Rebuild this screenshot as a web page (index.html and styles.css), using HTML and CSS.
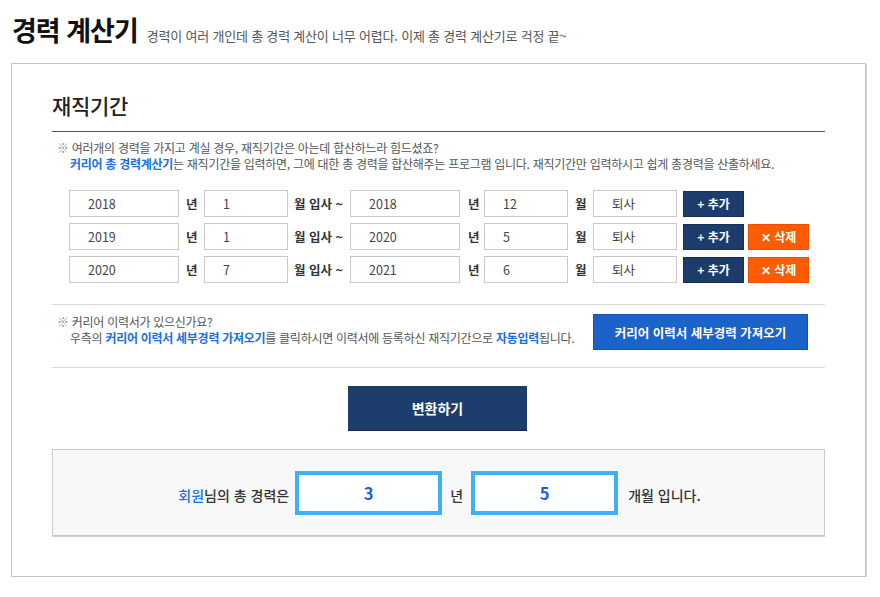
FILE: index.html
```html
<!DOCTYPE html>
<html lang="ko">
<head>
<meta charset="utf-8">
<title>경력 계산기</title>
<link rel="stylesheet" href="styles.css">
</head>
<body>
<header class="page-head">
  <h1 class="page-title">경력 계산기</h1>
  <span class="page-sub">경력이 여러 개인데 총 경력 계산이 너무 어렵다. 이제 총 경력 계산기로 걱정 끝~</span>
</header>
<main class="calc-box">
  <h2 class="sec-title">재직기간</h2>
  <div class="note">
    <p class="note-line"><span class="mark">※</span> 여러개의 경력을 가지고 계실 경우, 재직기간은 아는데 합산하느라 힘드셨죠?</p>
    <p class="note-line indent"><b class="blue">커리어 총 경력계산기</b>는 재직기간을 입력하면, 그에 대한 총 경력을 합산해주는 프로그램 입니다. 재직기간만 입력하시고 쉽게 총경력을 산출하세요.</p>
  </div>
  <div class="rows">
    <div class="row">
      <input class="inp wide" value="2018"><span class="lbl l1">년</span>
      <input class="inp" value="1"><span class="lbl l2">월 입사 ~</span>
      <input class="inp wide" value="2018"><span class="lbl l3">년</span>
      <input class="inp" value="12"><span class="lbl l4">월</span>
      <input class="inp" value="퇴사">
      <button class="btn-add">+ 추가</button>
    </div>
    <div class="row">
      <input class="inp wide" value="2019"><span class="lbl l1">년</span>
      <input class="inp" value="1"><span class="lbl l2">월 입사 ~</span>
      <input class="inp wide" value="2020"><span class="lbl l3">년</span>
      <input class="inp" value="5"><span class="lbl l4">월</span>
      <input class="inp" value="퇴사">
      <button class="btn-add">+ 추가</button>
      <button class="btn-del">✕ 삭제</button>
    </div>
    <div class="row">
      <input class="inp wide" value="2020"><span class="lbl l1">년</span>
      <input class="inp" value="7"><span class="lbl l2">월 입사 ~</span>
      <input class="inp wide" value="2021"><span class="lbl l3">년</span>
      <input class="inp" value="6"><span class="lbl l4">월</span>
      <input class="inp" value="퇴사">
      <button class="btn-add">+ 추가</button>
      <button class="btn-del">✕ 삭제</button>
    </div>
  </div>
  <section class="import">
    <div class="note">
      <p class="note-line"><span class="mark">※</span> 커리어 이력서가 있으신가요?</p>
      <p class="note-line indent">우측의 <b class="blue">커리어 이력서 세부경력 가져오기</b>를 클릭하시면 이력서에 등록하신 재직기간으로 <b class="blue">자동입력</b>됩니다.</p>
    </div>
    <button class="btn-import">커리어 이력서 세부경력 가져오기</button>
  </section>
  <div class="convert-wrap"><button class="btn-convert">변환하기</button></div>
  <div class="result">
    <span class="res-text"><span class="blue-plain">회원</span>님의 총 경력은</span>
    <span class="res-box">3</span>
    <span class="res-text unit">년</span>
    <span class="res-box">5</span>
    <span class="res-text tail">개월 입니다.</span>
  </div>
</main>
</body>
</html>
```
FILE: styles.css
```css
* { box-sizing: border-box; }
body {
  margin: 0;
  font-family: "Noto Sans CJK KR", "Noto Sans", sans-serif;
  color: #333;
  background: #fff;
}
.page-head {
  display: flex;
  align-items: baseline;
  padding: 10px 0 0 12px;
  height: 63px;
}
.page-title {
  margin: 0;
  font-size: 27px;
  font-weight: 700;
  color: #111;
  letter-spacing: -1px;
  line-height: 40px;
}
.page-sub {
  margin-left: 9px;
  font-size: 13px;
  color: #555;
  letter-spacing: -0.2px;
}
.calc-box {
  margin-left: 11px;
  width: 855px;
  height: 514px;
  border: 1px solid #c4c4c4;
  box-shadow: 1px 1px 0 #d4d4d4;
  padding: 26px 40px 0 40px;
}
.sec-title {
  margin: 0;
  font-size: 21px;
  font-weight: 500;
  color: #222;
  line-height: 30px;
  padding-bottom: 11px;
  border-bottom: 1px solid #555;
  letter-spacing: -0.3px;
}
.note { padding-top: 8px; }
.note-line {
  margin: 0;
  font-size: 12px;
  line-height: 16px;
  color: #555;
  letter-spacing: -0.28px;
  white-space: nowrap;
}
.note-line.indent { padding-left: 18px; }
.mark { color: #888; margin-left: 5px; }
.blue { color: #1a6fe0; font-weight: 700; }
.blue-plain { color: #1a6fe0; }
.rows {
  display: flex;
  flex-direction: column;
  gap: 6px;
  padding: 18px 0 0 17px;
}
.row {
  display: flex;
  align-items: center;
  height: 27px;
}
.inp {
  width: 84px;
  height: 27px;
  border: 1px solid #c8c8c8;
  padding: 0 0 0 18px;
  font: 12.5px "Noto Sans CJK KR", sans-serif;
  color: #444;
  outline: none;
  background: #fff;
}
.inp.wide { width: 110px; }
.lbl {
  font-size: 12.5px;
  font-weight: 700;
  color: #333;
  padding-left: 7px;
}
.l1 { width: 25px; }
.l2 { width: 62px; padding-left: 6px; }
.l3 { width: 24px; padding-left: 8px; }
.l4 { width: 25px; padding-left: 7px; }
.btn-add, .btn-del {
  height: 26px;
  width: 61px;
  border: 1px solid #14305a;
  background: #1c3d6c;
  color: #fff;
  font: 700 12px "Noto Sans CJK KR", sans-serif;
  padding: 0;
  margin-left: 6px;
}
.btn-del {
  background: #ff5b00;
  border-color: #f05000;
  margin-left: 4px;
}
.import {
  display: flex;
  justify-content: space-between;
  align-items: flex-start;
  margin-top: 21px;
  padding-top: 9px;
  border-top: 1px solid #d8d8d8;
  border-bottom: 1px solid #d8d8d8;
  height: 64px;
}
.import .note { padding-top: 0; }
.btn-import {
  width: 215px;
  height: 36px;
  margin-right: 17px;
  background: #1b62c9;
  border: 1px solid #1552ad;
  color: #fff;
  font: 700 12.5px "Noto Sans CJK KR", sans-serif;
  padding: 0;
}
.convert-wrap {
  display: flex;
  justify-content: center;
  padding-top: 18px;
}
.btn-convert {
  width: 179px;
  height: 45px;
  background: #1d3e6d;
  border: none;
  border-bottom: 1px solid #112a4e;
  color: #fff;
  font: 700 14px "Noto Sans CJK KR", sans-serif;
  padding: 0;
  margin-right: 2px;
}
.result {
  margin-top: 18px;
  height: 87px;
  background: #f8f8f8;
  border: 1px solid #c8c8c8;
  box-shadow: 0 1px 0 #d0d0d0;
  display: flex;
  justify-content: center;
  align-items: center;
  padding-left: 2px;
}
.res-text {
  font-size: 14px;
  font-weight: 500;
  color: #333;
  padding-top: 4px;
}
.res-box {
  width: 147px;
  height: 44px;
  border: 4px solid #3cb1f8;
  background: #fff;
  display: flex;
  justify-content: center;
  align-items: center;
  font-size: 16.5px;
  font-weight: 700;
  color: #1a5ee8;
  margin: 0 6px;
}
.unit { padding: 4px 2px 0 2px; }
.tail { margin-left: 4px; }
```
